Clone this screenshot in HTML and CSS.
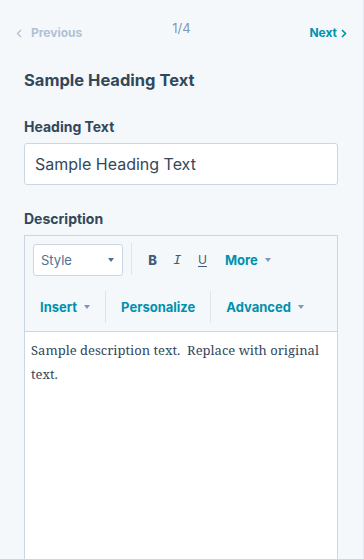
FILE: index.html
```
<!DOCTYPE html>
<html>
<head>
<meta charset="utf-8">
<link rel="stylesheet" href="styles.css">
</head>
<body>
<div class="panel">
  <nav class="pager">
    <span class="pager-prev">
      <svg class="chev" width="6" height="9" viewBox="0 0 6 9"><path d="M5 1 L1.5 4.5 L5 8" fill="none" stroke="currentColor" stroke-width="1.3"/></svg>
      Previous
    </span>
    <span class="pager-count">1/4</span>
    <span class="pager-next">
      Next
      <svg class="chev" width="6" height="9" viewBox="0 0 6 9"><path d="M1 1 L4.5 4.5 L1 8" fill="none" stroke="currentColor" stroke-width="1.6"/></svg>
    </span>
  </nav>

  <h2 class="title">Sample Heading Text</h2>

  <label class="field-label">Heading Text</label>
  <div class="text-input">Sample Heading Text</div>

  <label class="field-label field-label-desc">Description</label>
  <div class="editor">
    <div class="toolbar">
      <div class="tb-row">
        <div class="style-select">
          <span>Style</span>
          <span class="caret"></span>
        </div>
        <span class="sep sep-first"></span>
        <span class="fmt fmt-b">B</span>
        <span class="fmt fmt-i">I</span>
        <span class="fmt fmt-u">U</span>
        <span class="tb-btn tb-more">More <span class="caret"></span></span>
      </div>
      <div class="tb-row tb-row2">
        <span class="tb-btn">Insert <span class="caret"></span></span>
        <span class="sep"></span>
        <span class="tb-btn">Personalize</span>
        <span class="sep"></span>
        <span class="tb-btn">Advanced <span class="caret"></span></span>
      </div>
    </div>
    <div class="editor-body">Sample description text.&nbsp; Replace with original text.</div>
  </div>
</div>
</body>
</html>
```
FILE: styles.css
```
html, body {
  margin: 0;
  padding: 0;
  background: #f5f8fa;
}
body {
  font-family: "Inter", "Open Sans", sans-serif;
  color: #33475b;
  width: 364px;
  height: 559px;
  overflow: hidden;
}
.panel {
  box-sizing: border-box;
  width: 364px;
  height: 559px;
  overflow: hidden;
  padding: 0 25px 0 24px;
  border-right: 1px solid #e3e9ef;
}
.pager {
  display: grid;
  grid-template-columns: 1fr auto 1fr;
  align-items: start;
  margin: 0 -9px 0 -8px;
  padding-top: 23px;
  height: 20px;
}
.pager-prev, .pager-next {
  display: flex;
  align-items: center;
  gap: 9px;
  font-size: 12px;
  font-weight: 700;
  line-height: 20px;
}
.pager-prev { color: #b0c1d4; }
.pager-next { color: #0091ae; gap: 4px; justify-self: end; }
.pager-count {
  font-size: 13px;
  line-height: 16px;
  color: #7c98b6;
  margin-top: -3px;
}
.chev { display: block; }
.title {
  margin: 25px 0 0;
  font-size: 16.5px;
  line-height: 24px;
  font-weight: 700;
}
.field-label {
  display: block;
  margin-top: 25px;
  font-size: 14px;
  line-height: 20px;
  font-weight: 700;
}
.field-label-desc { margin-top: 24px; }
.text-input {
  box-sizing: border-box;
  margin-top: 6px;
  height: 42px;
  background: #fff;
  border: 1px solid #cbd6e2;
  border-radius: 3px;
  padding: 0 10px;
  font-size: 16px;
  line-height: 40px;
}
.editor {
  margin-top: 6px;
  border: 1px solid #cbd6e2;
  border-bottom: none;
  background: #fff;
}
.toolbar {
  background: #f5f8fa;
  border-bottom: 1px solid #cbd6e2;
  padding: 8px 8px 8px;
}
.tb-row {
  display: flex;
  align-items: center;
  height: 32px;
}
.tb-row2 { margin-top: 15px; }
.style-select {
  box-sizing: border-box;
  width: 90px;
  height: 32px;
  background: #fff;
  border: 1px solid #cbd6e2;
  border-radius: 3px;
  display: flex;
  align-items: center;
  justify-content: space-between;
  padding: 0 8px 0 7px;
  font-size: 13px;
  color: #516f90;
}
.caret {
  display: inline-block;
  width: 0;
  height: 0;
  border-left: 3.5px solid transparent;
  border-right: 3.5px solid transparent;
  border-top: 4px solid #7c98b6;
}
.style-select .caret { border-top-color: #516f90; }
.sep {
  width: 1px;
  height: 32px;
  background: #dfe3eb;
  margin: 0 8px;
}
.sep-first {
  position: relative;
  top: -1px;
}
.fmt {
  width: 25px;
  text-align: center;
  font-size: 13px;
  color: #425b76;
  line-height: 20px;
}
.fmt-b { font-weight: 800; }
.fmt-i { font-family: "DejaVu Sans Mono", monospace; font-style: italic; font-size: 13px; }
.fmt-u { text-decoration: underline; text-underline-offset: 2px; text-decoration-thickness: 1px; font-size: 12px; }
.tb-btn {
  display: inline-flex;
  align-items: center;
  gap: 7px;
  padding: 0 7px;
  font-size: 13px;
  font-weight: 700;
  color: #0091ae;
  line-height: 20px;
}
.tb-more { padding-left: 10px; }
.editor-body {
  min-height: 230px;
  padding: 6px 6px 0;
  font-family: "Noto Serif", "Liberation Serif", serif;
  font-size: 13px;
  line-height: 24px;
  color: #33475b;
}
```
